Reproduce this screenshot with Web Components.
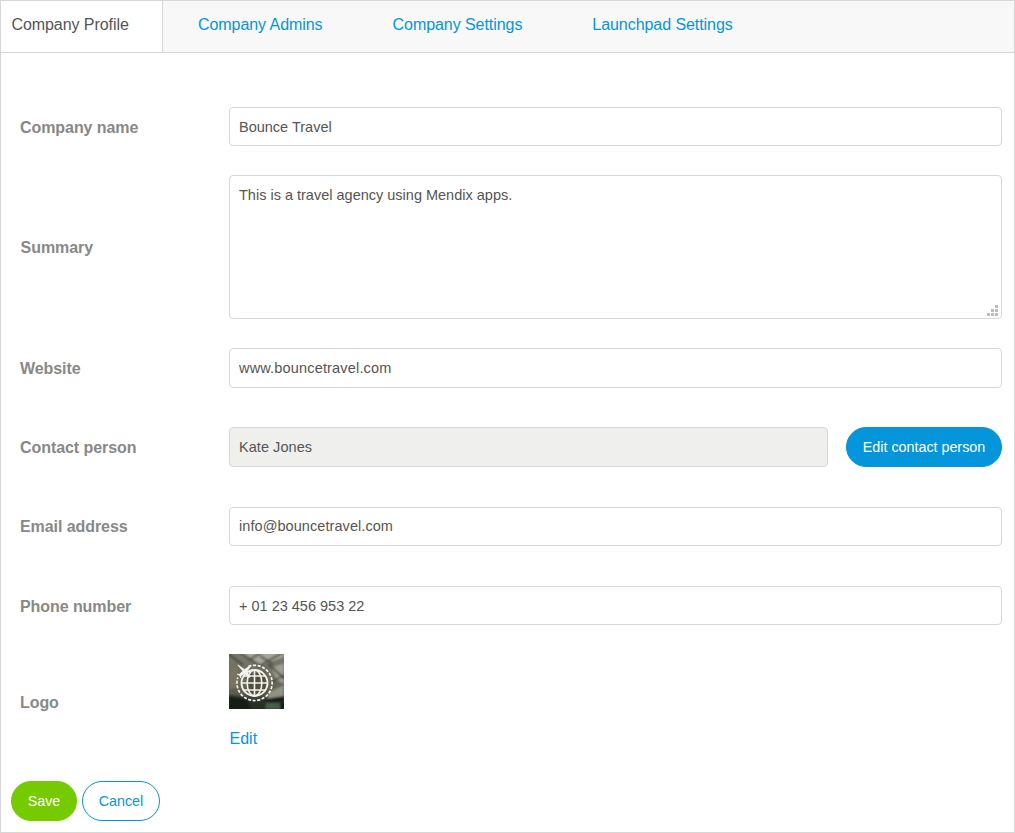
<!DOCTYPE html>
<html lang="en">
<head>
<meta charset="utf-8">
<title>Company Profile</title>
<style>
html,body{margin:0;height:100%}
body{font:16px/20px "Liberation Sans",Arial,sans-serif;color:#555;background:#fff}
</style>
</head>
<body>
<company-page></company-page>
<script>
const define = (name, html) => customElements.define(name, class extends HTMLElement {
  constructor() {
    super();
    const t = document.createElement('template');
    t.innerHTML = html;
    this.attachShadow({mode: 'open'}).append(t.content.cloneNode(true));
  }
});

define('tab-bar', `<style>
:host{display:flex;height:51px;background:#f8f8f8;border-bottom:1px solid #d7d7d7}
</style><slot></slot>`);

define('tab-item', `<style>
:host{display:block;box-sizing:border-box;padding:14px 35px 0;color:#0595db;white-space:nowrap;letter-spacing:-.06px;cursor:pointer}
:host([active]){width:162px;height:52px;padding:14px 0 0 10.4px;background:#fff;color:#555;border-right:1px solid #d7d7d7;border-bottom:1px solid #d7d7d7}
</style><slot></slot>`);

define('form-row', `<style>
:host{display:grid;grid-template-columns:209px 1fr;align-items:center}
.label{font-weight:bold;color:#888;letter-spacing:-.07px;padding-top:var(--label-drop,2px)}
.control{display:flex;gap:18px;min-width:0}
</style><div class="label"><slot name="label"></slot></div><div class="control"><slot></slot></div>`);

define('text-field', `<style>
:host{display:flex;align-items:center;flex:1;box-sizing:border-box;height:39px;padding:0 9px;border:1px solid #d7d7d7;border-radius:4px;background:#fff;font-size:14.5px;letter-spacing:var(--track,0);white-space:pre}
:host([tall]){height:40px}
:host([disabled]){background:#efefee}
span{padding-bottom:var(--text-lift,0)}
</style><span><slot></slot></span>`);

define('text-box', `<style>
:host{display:block;position:relative;flex:1;box-sizing:border-box;height:144px;padding:9px;border:1px solid #d7d7d7;border-radius:4px;font-size:14.5px}
svg{position:absolute;right:3px;bottom:2px;display:block}
</style><slot></slot><svg width="11" height="11" fill="#bbb" shape-rendering="crispEdges"><path d="M8 0h3v3h-3zM4 4h3v3h-3zM8 4h3v3h-3zM0 8h3v3h-3zM4 8h3v3h-3zM8 8h3v3h-3z"/></svg>`);

define('pill-button', `<style>
:host{display:flex;align-items:center;justify-content:center;box-sizing:border-box;height:40px;border:1px solid #0595db;border-radius:20px;background:#0595db;color:#fff;font-size:14.3px;white-space:nowrap;cursor:pointer}
:host([kind=success]){background:#76ca02;border-color:#76ca02}
:host([kind=outline]){background:#fff;color:#0595db}
</style><span><slot></slot></span>`);

define('logo-picker', `<style>
:host{display:flex;flex-direction:column;height:96px}
svg{display:block}
a{margin:20px 0 0 .5px;color:#0595db;cursor:pointer}
</style>
<svg width="55" height="55" viewBox="0 0 55 55">
 <defs>
  <linearGradient id="bg" x1="0" y1="0" x2="0" y2="1"><stop offset="0" stop-color="#77776a"/><stop offset=".45" stop-color="#6d6c60"/><stop offset=".72" stop-color="#5a5b4c"/><stop offset=".84" stop-color="#2d3228"/><stop offset="1" stop-color="#262c23"/></linearGradient>
  <filter id="soft" x="-20%" y="-20%" width="140%" height="140%"><feGaussianBlur stdDeviation="1.1"/></filter>
  <filter id="edge"><feGaussianBlur stdDeviation=".35"/></filter>
 </defs>
 <rect width="55" height="55" fill="url(#bg)"/>
 <g filter="url(#soft)">
  <path d="M14 0L30 12L55 3V-2H14z" fill="#a5a599"/>
  <path d="M42 14L55 9V30L48 26z" fill="#9f9e92"/>
  <path d="M0 14L9 10L8 33L0 35z" fill="#77745d"/>
  <path d="M40 38L55 31V43L38 45z" fill="#929284"/>
  <path d="M-2 -1L14 11M10 -2L32 12M20 6L33 -2M28 13L55 -2M39 10L57 26M31 2L44 10M43 28L57 20" fill="none" stroke="#44483d" stroke-width="1.8"/>
  <path d="M18 20L36 17L39 39L18 40z" fill="#515042"/>
  <path d="M0 42L17 45L22 55H0zM36 45L55 42V48H38z" fill="#171d16"/>
  <path d="M37 49H55V55H36z" fill="#4a5d4c"/>
  <path d="M51 49H55V55H51z" fill="#121710"/>
 </g>
 <g fill="none" stroke="#f3f3ec" filter="url(#edge)">
  <circle cx="25.5" cy="29" r="13" stroke-width="1.9"/>
  <ellipse cx="25.5" cy="29" rx="7.3" ry="13" stroke-width="1.6"/>
  <path d="M25.5 16V42M12.7 29H38.3M15 22H36M15 36H36" stroke-width="1.6"/>
  <path d="M19.5 12.4A17.6 17.6 0 1 1 8.8 23.5" stroke-width="1.7" stroke-dasharray="3.1 1.5"/>
 </g>
 <path filter="url(#edge)" d="M9 10.5L15.5 15.2L20.8 11.5L22 12.3L18.2 17.4L21.3 23.2L19.8 24L15.8 19.5L12.1 22.2L12.3 24L11.3 24L10.3 21.6L8 20.7L8.2 19.8L10.4 20L13.6 17L8.6 11.3z" fill="#f5f5ef"/>
</svg>
<a><slot></slot></a>`);

define('company-page', `<style>
:host{display:flex;flex-direction:column;box-sizing:border-box;width:1015px;height:833px;border:1px solid #d7d7d7;background:#fff}
.form{display:flex;flex-direction:column;padding:54px 12px 0 19px}
.g29{margin-top:29px}.g39{margin-top:39px}.g40{margin-top:40px}
.email{--label-drop:0;--text-lift:2px}
.indent{padding-left:.6px}
.actions{display:flex;gap:5px;padding:31px 0 0 10px}
</style>
<tab-bar><tab-item active>Company Profile</tab-item><tab-item>Company Admins</tab-item><tab-item>Company Settings</tab-item><tab-item>Launchpad Settings</tab-item></tab-bar>
<div class="form">
<form-row><span slot="label">Company name</span><text-field>Bounce Travel</text-field></form-row>
<form-row class="g29"><span slot="label" class="indent">Summary</span><text-box>This is a travel agency using Mendix apps.</text-box></form-row>
<form-row class="g29"><span slot="label">Website</span><text-field tall style="--track:.17px">www.bouncetravel.com</text-field></form-row>
<form-row class="g39"><span slot="label">Contact person</span><text-field tall disabled style="--track:.05px">Kate Jones</text-field><pill-button style="width:156px">Edit contact person</pill-button></form-row>
<form-row class="g40 email"><span slot="label">Email address</span><text-field style="--track:.07px">info@bouncetravel.com</text-field></form-row>
<form-row class="g40"><span slot="label">Phone number</span><text-field>+ 01 23 456 953 22</text-field></form-row>
<form-row class="g29"><span slot="label">Logo</span><logo-picker>Edit</logo-picker></form-row>
</div>
<div class="actions"><pill-button kind="success" style="width:66px">Save</pill-button><pill-button kind="outline" style="width:78px">Cancel</pill-button></div>`);
</script>
</body>
</html>
